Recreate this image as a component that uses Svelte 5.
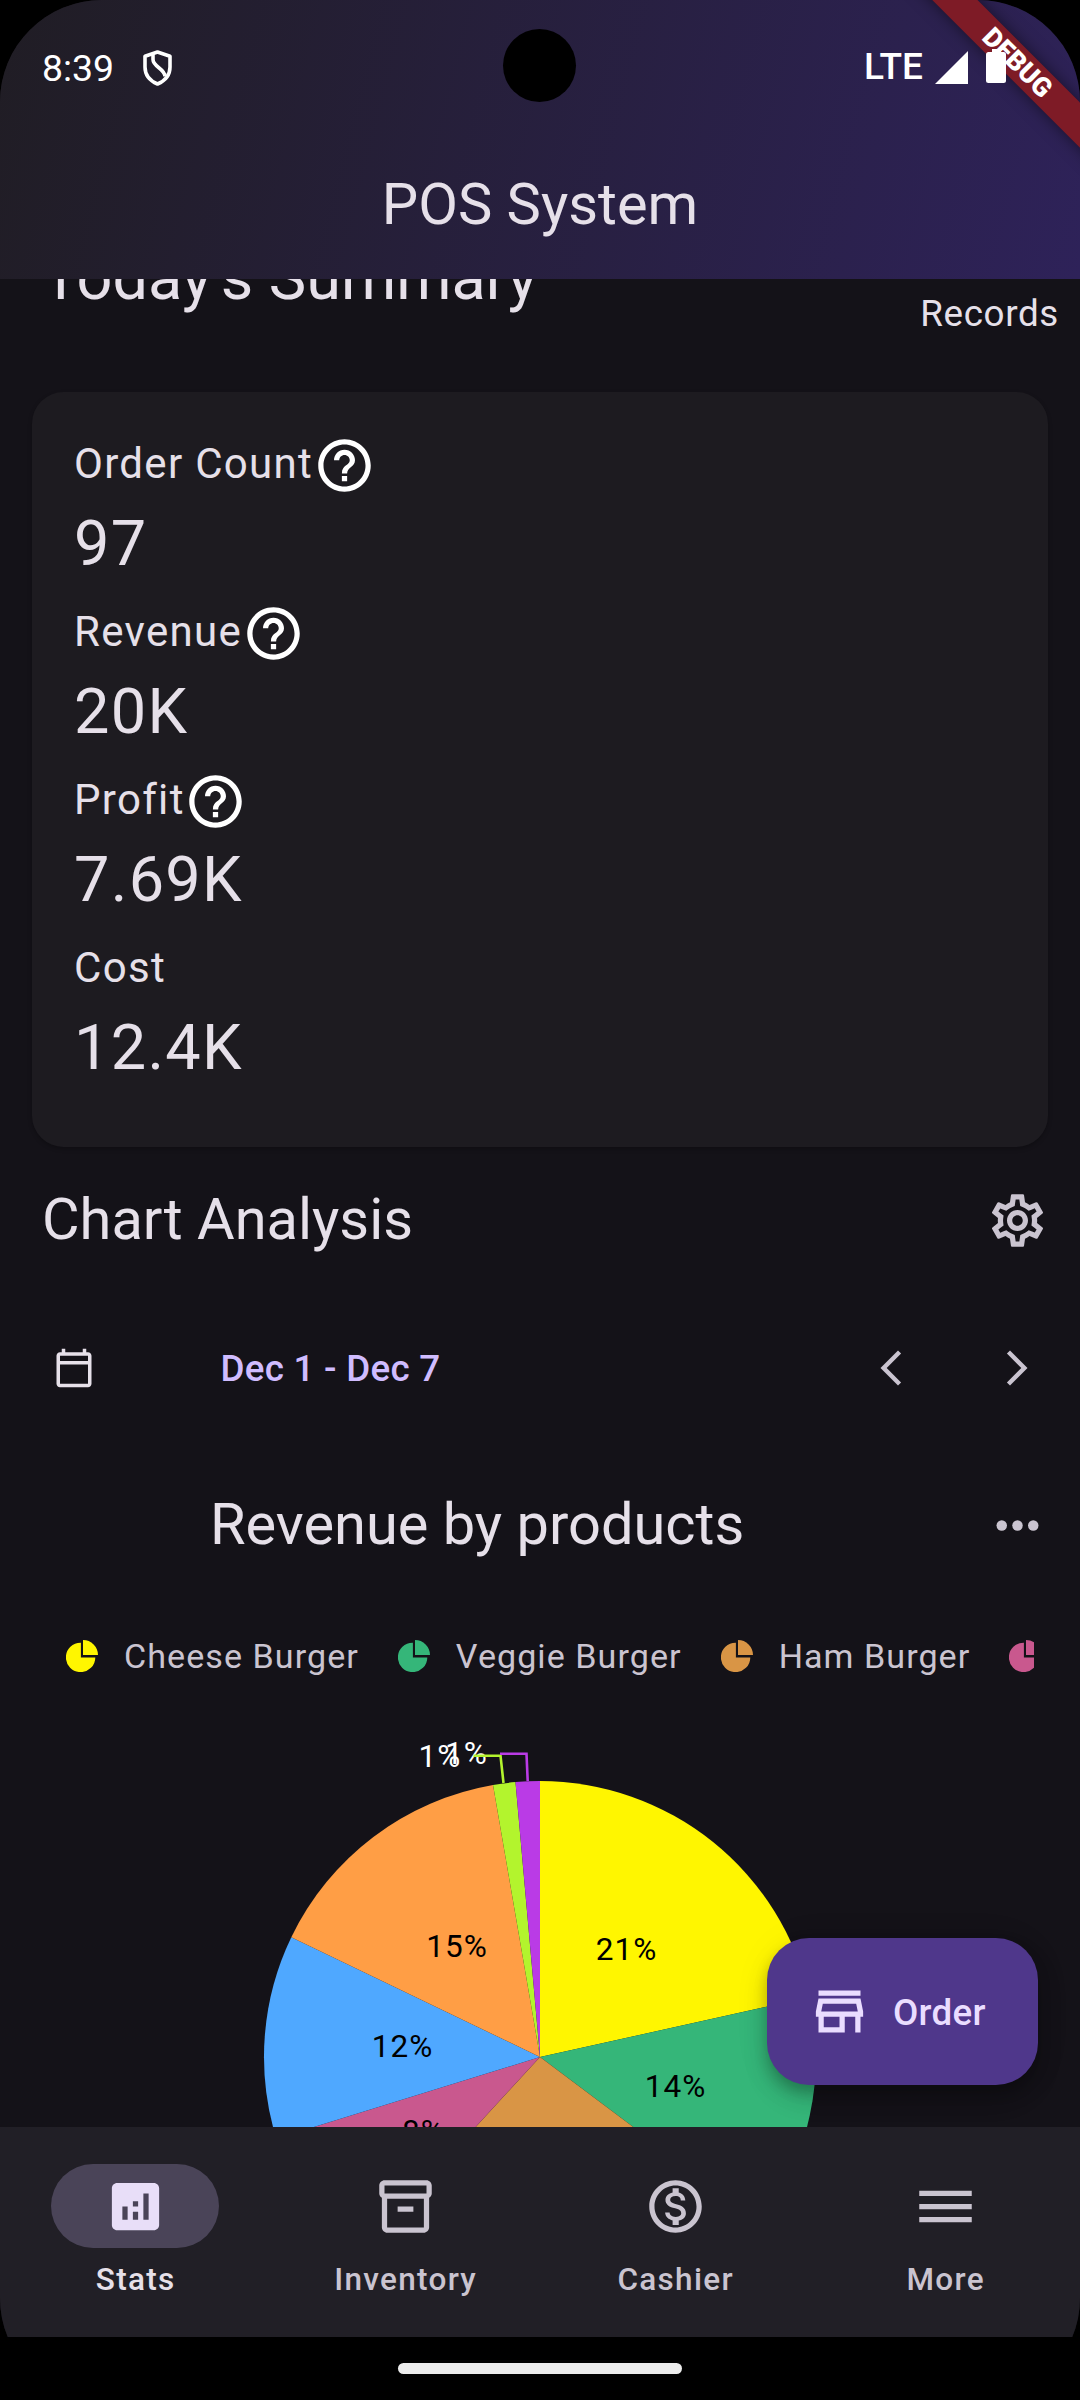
<script>
  const metrics = [
    { label: 'Order Count', value: '97', help: true },
    { label: 'Revenue', value: '20K', help: true },
    { label: 'Profit', value: '7.69K', help: true },
    { label: 'Cost', value: '12.4K', help: false },
  ];

  const legend = [
    { name: 'Cheese Burger', color: '#fff600' },
    { name: 'Veggie Burger', color: '#35b679' },
    { name: 'Ham Burger', color: '#d99545' },
    { name: '', color: '#c9588e' },
  ];

  // Slice boundaries in degrees, clockwise from twelve o'clock
  const slices = [
    { from: 0, to: 77.5, color: '#fff600' },
    { from: 77.5, to: 126.9, color: '#35b679' },
    { from: 126.9, to: 222.6, color: '#d99545' },
    { from: 222.6, to: 252.8, color: '#c9588e' },
    { from: 252.8, to: 295.7, color: '#4fa8ff' },
    { from: 295.7, to: 350.2, color: '#ff9e45' },
    { from: 350.2, to: 354.9, color: '#b3f42d' },
    { from: 354.9, to: 360, color: '#ba3be6' },
  ];

  const labels = [
    { text: '21%', x: 626.5, y: 247 },
    { text: '14%', x: 675.5, y: 384 },
    { text: '8%', x: 423.5, y: 429 },
    { text: '12%', x: 402.5, y: 344 },
    { text: '15%', x: 457, y: 244 },
  ];

  const cx = 540;
  const cy = 344;
  const r = 276;

  function point(deg) {
    const a = (deg * Math.PI) / 180;
    return `${(cx + r * Math.sin(a)).toFixed(2)} ${(cy - r * Math.cos(a)).toFixed(2)}`;
  }

  function wedge(s) {
    return `M${cx} ${cy}L${point(s.from)}A${r} ${r} 0 0 1 ${point(s.to)}Z`;
  }

  const tabs = [
    {
      name: 'Stats',
      active: true,
      icon: 'M19 3H5c-1.1 0-2 .9-2 2v14c0 1.1.9 2 2 2h14c1.1 0 2-.9 2-2V5c0-1.1-.9-2-2-2zM9 17H7v-5h2v5zm4 0h-2v-3h2v3zm0-5h-2v-2h2v2zm4 5h-2V7h2v10z',
    },
    {
      name: 'Inventory',
      active: false,
      icon: 'M20 2H4c-1 0-2 .9-2 2v3.01c0 .72.43 1.34 1 1.69V20c0 1.1 1.1 2 2 2h14c.9 0 2-.9 2-2V8.7c.57-.35 1-.97 1-1.69V4c0-1.1-1-2-2-2zm-1 18H5V9h14v11zm1-13H4V4h16v3zM9 12h6v2H9z',
    },
    {
      name: 'Cashier',
      active: false,
      icon: 'M12 2C6.48 2 2 6.48 2 12s4.48 10 10 10 10-4.48 10-10S17.52 2 12 2zm0 18c-4.41 0-8-3.59-8-8s3.59-8 8-8 8 3.59 8 8-3.59 8-8 8zm.31-8.86c-1.77-.45-2.34-.94-2.34-1.67 0-.84.79-1.43 2.1-1.43 1.38 0 1.9.66 1.94 1.64h1.71c-.05-1.34-.87-2.57-2.49-2.97V5H10.9v1.69c-1.51.32-2.72 1.3-2.72 2.81 0 1.79 1.49 2.69 3.66 3.21 1.95.46 2.34 1.15 2.34 1.87 0 .53-.39 1.39-2.1 1.39-1.6 0-2.23-.72-2.32-1.64H8.04c.1 1.7 1.36 2.66 2.86 2.97V19h2.34v-1.67c1.52-.29 2.72-1.16 2.73-2.77-.01-2.2-1.9-2.96-3.66-3.42z',
    },
    { name: 'More', active: false, icon: 'M2 6h20v2H2zm0 5h20v2H2zm0 5h20v2H2z' },
  ];
</script>

<div class="phone">
  <header>
    <div class="status">
      <span class="clock">8:39</span>
      <svg class="shield" viewBox="0 0 29 36" fill="none" stroke="#fff" stroke-width="3.6" stroke-linejoin="round">
        <path d="M14.500 2 27 6.300V17c0 7.600-4.800 13.800-12.500 17C6.800 30.800 2 24.600 2 17V6.300z" />
        <path d="M10 4.500v5c0 7.500 12 9 12 17" />
      </svg>
      <span class="lte">LTE</span>
      <svg class="signal" viewBox="0 0 33 33"><path d="M33 0v33H0z" fill="#fff" /></svg>
    </div>
    <h1>POS System</h1>
    <div class="camera"></div>
    <div class="banner"><span>DEBUG</span></div>
    <svg class="battery" viewBox="0 0 20 34" fill="#fff">
      <path d="M6 0h9v4H6z" />
      <rect y="3" width="20" height="31" rx="2.500" />
    </svg>
  </header>

  <main>
    <div class="summary-head">
      <h2 class="today">Today's Summary</h2>
      <span class="records">Records</span>
    </div>

    <section class="card">
      {#each metrics as m}
        <div class="metric">
          <div class="metric-label">
            <span>{m.label}</span>
            {#if m.help}
              <svg class="icon" viewBox="0 0 24 24" fill="#fff">
                <path d="M11 18h2v-2h-2v2zm1-16C6.480 2 2 6.480 2 12s4.480 10 10 10 10-4.480 10-10S17.520 2 12 2zm0 18c-4.410 0-8-3.590-8-8s3.590-8 8-8 8 3.590 8 8-3.590 8-8 8zm0-14c-2.210 0-4 1.790-4 4h2c0-1.100.9-2 2-2s2 .9 2 2c0 2-3 1.750-3 5h2c0-2.250 3-2.500 3-5 0-2.210-1.790-4-4-4z" />
              </svg>
            {/if}
          </div>
          <div class="metric-value">{m.value}</div>
        </div>
      {/each}
    </section>

    <div class="analysis-head">
      <h2>Chart Analysis</h2>
      <svg class="icon" viewBox="0 0 24 24" fill="#cac4d0">
        <path d="M19.430 12.980c.04-.32.070-.64.070-.98s-.03-.66-.07-.98l2.110-1.650c.19-.15.240-.42.120-.64l-2-3.460c-.09-.16-.26-.25-.44-.25-.06 0-.12.010-.17.030l-2.490 1c-.52-.4-1.080-.73-1.690-.98l-.38-2.650C14.460 2.180 14.250 2 14 2h-4c-.25 0-.46.180-.49.420l-.38 2.650c-.61.250-1.170.590-1.690.980l-2.490-1c-.06-.02-.12-.03-.18-.03-.17 0-.34.090-.43.250l-2 3.460c-.13.220-.07.490.120.640l2.110 1.650c-.04.320-.07.650-.07.980s.03.660.070.980l-2.110 1.650c-.19.150-.24.420-.12.640l2 3.460c.09.160.260.250.440.250.06 0 .12-.01.170-.03l2.490-1c.52.400 1.080.730 1.690.980l.38 2.650c.03.240.240.420.490.420h4c.25 0 .46-.18.490-.42l.38-2.650c.61-.25 1.170-.59 1.690-.98l2.490 1c.06.020.120.030.180.030.17 0 .34-.09.430-.25l2-3.460c.12-.22.070-.49-.12-.64l-2.110-1.650zm-1.980-1.710c.04.310.050.520.050.730s-.02.430-.05.730l-.14 1.130.890.700 1.080.840-.7 1.210-1.270-.51-1.040-.42-.9.680c-.43.320-.84.560-1.250.730l-1.060.430-.16 1.130-.2 1.350h-1.400l-.19-1.350-.16-1.130-1.060-.43c-.43-.18-.83-.41-1.230-.71l-.91-.7-1.060.430-1.270.510-.7-1.210 1.080-.84.890-.7-.14-1.130c-.03-.31-.05-.54-.05-.74s.02-.43.050-.73l.14-1.130-.89-.7-1.080-.84.700-1.210 1.270.510 1.040.420.900-.68c.43-.32.840-.56 1.250-.73l1.060-.43.160-1.130.2-1.350h1.390l.19 1.350.160 1.130 1.060.430c.43.180.830.410 1.230.710l.91.700 1.060-.43 1.270-.51.700 1.210-1.070.850-.89.700.140 1.130zM12 8c-2.210 0-4 1.790-4 4s1.790 4 4 4 4-1.790 4-4-1.790-4-4-4zm0 6c-1.100 0-2-.9-2-2s.9-2 2-2 2 .9 2 2-.9 2-2 2z" />
      </svg>
    </div>

    <div class="range">
      <svg class="small-icon" viewBox="0 0 24 24" fill="#e6e0e9">
        <path d="M20 3h-1V1h-2v2H7V1H5v2H4c-1.100 0-2 .9-2 2v16c0 1.100.9 2 2 2h16c1.100 0 2-.9 2-2V5c0-1.100-.9-2-2-2zm0 18H4V10h16v11zm0-13H4V5h16v3z" />
      </svg>
      <span class="dates">Dec 1 - Dec 7</span>
      <svg class="small-icon prev" viewBox="0 0 24 24" fill="#cac4d0">
        <path d="M17.770 3.770 16 2 6 12l10 10 1.770-1.770L9.540 12z" />
      </svg>
      <svg class="small-icon" viewBox="0 0 24 24" fill="#cac4d0">
        <path d="M6.230 20.230 8 22l10-10L8 2 6.230 3.770 14.460 12z" />
      </svg>
    </div>

    <div class="chart-head">
      <h2>Revenue by products</h2>
      <svg class="icon" viewBox="0 0 24 24" fill="#cac4d0">
        <circle cx="6" cy="12" r="2" /><circle cx="12" cy="12" r="2" /><circle cx="18" cy="12" r="2" />
      </svg>
    </div>

    <div class="legend">
      {#each legend as item}
        <div class="legend-item">
          <svg viewBox="0 0 32 32" fill={item.color}>
            <path d="M14.900 17.400V2.700A14.700 14.700 0 1 0 29.300 17.400z" />
            <path d="M17 0A15 15 0 0 1 32 15H17z" />
          </svg>
          <span>{item.name}</span>
        </div>
      {/each}
    </div>

    <svg class="pie" viewBox="0 0 1080 414" width="1080" height="414">
      {#each slices as s}
        <path d={wedge(s)} fill={s.color} />
      {/each}
      {#each labels as l}
        <text x={l.x} y={l.y} text-anchor="middle">{l.text}</text>
      {/each}
      <text class="outer" x="440" y="54" text-anchor="middle">1%</text>
      <text class="outer" x="466.500" y="51" text-anchor="middle">1%</text>
      <path d="M473.500 42.700H500.500L503.500 70" fill="none" stroke="#b3f42d" stroke-width="2.600" />
      <path d="M500 40.700H526.500L527.700 68" fill="none" stroke="#ba3be6" stroke-width="2.600" />
    </svg>

    <button class="fab">
      <svg class="icon" viewBox="0 0 24 24" fill="#eaddff">
        <path d="M18.360 9l.6 3H5.040l.6-3h12.720M20 4H4v2h16V4zm0 3H4l-1 5v2h1v6h10v-6h4v6h2v-6h1v-2l-1-5zM6 18v-4h6v4H6z" />
      </svg>
      <span>Order</span>
    </button>
  </main>

  <nav>
    {#each tabs as t}
      <div class="tab" class:active={t.active}>
        <div class="pill">
          <svg class="icon" viewBox="0 0 24 24" fill="currentColor"><path d={t.icon} /></svg>
        </div>
        <span>{t.name}</span>
      </div>
    {/each}
  </nav>
</div>
<div class="gesture"><div class="handle"></div></div>

<style>
  :global(body) {
    background: #000;
    font-family: Roboto, 'Liberation Sans', sans-serif;
  }

  .phone {
    width: 1080px;
    height: 2337px;
    display: flex;
    flex-direction: column;
    overflow: hidden;
    background: #141218;
    color: #e6e0e9;
    clip-path: inset(0 0 -63px 0 round 102px);
  }

  h1,
  h2 {
    margin: 0;
    font-size: 57.75px;
    line-height: 73.5px;
    font-weight: 400;
    white-space: nowrap;
  }

  .icon {
    display: block;
    width: 63px;
    height: 63px;
    flex: none;
  }

  header {
    position: relative;
    height: 279px;
    flex: none;
    overflow: hidden;
    background: linear-gradient(104.5deg, #201d24, #2e2259);
  }

  .status {
    height: 132px;
    box-sizing: border-box;
    padding: 3px 0 0 42px;
    display: flex;
    align-items: center;
    color: #fff;
    font-size: 37.4px;
  }

  .clock {
    width: 101px;
  }

  .shield {
    width: 29px;
    height: 36px;
  }

  .lte {
    margin-left: 692px;
    margin-top: -2px;
    width: 71px;
    font-weight: 500;
    font-size: 37px;
  }

  .signal {
    width: 33px;
    height: 33px;
  }

  header h1 {
    padding-top: 36px;
    text-align: center;
  }

  .camera {
    position: absolute;
    left: 503px;
    top: 29px;
    width: 73px;
    height: 73px;
    border-radius: 50%;
    background: #000;
  }

  .battery {
    position: absolute;
    left: 986px;
    top: 49px;
    width: 20px;
    height: 34px;
  }

  .banner {
    position: absolute;
    left: 867px;
    top: 46px;
    width: 300px;
    height: 31.5px;
    display: flex;
    align-items: center;
    justify-content: center;
    transform: rotate(45deg);
    background: #7e1b26;
    box-shadow: 0 0 16px rgba(0, 0, 0, 0.5);
    color: #fff;
    font-size: 26.8px;
    font-weight: 900;
  }

  .banner span {
    padding-left: 2px;
  }

  main {
    position: relative;
    height: 1848px;
    overflow: hidden;
  }

  .summary-head {
    height: 113px;
    display: flex;
    align-items: flex-start;
    justify-content: space-between;
    padding: 0 21px 0 42px;
  }

  .today {
    margin-top: -43px;
    font-size: 63px;
    line-height: 84px;
  }

  .records {
    margin-top: 9px;
    font-size: 36.75px;
    line-height: 52.5px;
    letter-spacing: 0.66px;
  }

  .card {
    margin: 0 32px;
    height: 755px;
    box-sizing: border-box;
    padding: 40px 42px 0;
    border-radius: 31.5px;
    background: #1d1b20;
    box-shadow: 0 2px 4px rgba(0, 0, 0, 0.25);
  }

  .metric {
    height: 168px;
  }

  .metric-label {
    display: flex;
    height: 70px;
    font-size: 42px;
    line-height: 63px;
    letter-spacing: 1.31px;
  }

  .metric-label .icon {
    margin-top: 2px;
    margin-left: -0.5px;
  }

  .metric-value {
    font-size: 63px;
    line-height: 84px;
    letter-spacing: 1.31px;
  }

  .analysis-head {
    height: 146px;
    padding: 0 31.5px 0 42px;
    display: flex;
    align-items: center;
    justify-content: space-between;
  }

  .range {
    height: 126px;
    margin-top: 12px;
    padding: 0 42px 0 52.5px;
    display: flex;
    align-items: center;
  }

  .small-icon {
    width: 42px;
    height: 42px;
    flex: none;
  }

  .dates {
    margin-left: 126px;
    color: #d0bcff;
    font-size: 36.75px;
    font-weight: 500;
    letter-spacing: 0.26px;
  }

  .prev {
    margin-left: auto;
    margin-right: 84px;
  }

  .chart-head {
    height: 126px;
    margin-top: 31px;
    padding: 0 31.5px 0 210px;
    display: flex;
    align-items: center;
    justify-content: space-between;
  }

  .chart-head h2 {
    margin-top: -1px;
  }

  .legend {
    margin: 0 46px 0 66px;
    padding-top: 36px;
    height: 89px;
    box-sizing: content-box;
    display: flex;
    gap: 39px;
    overflow: hidden;
  }

  .legend-item {
    flex: none;
    display: flex;
    align-items: center;
    gap: 26px;
    height: 63px;
    color: #cac4d0;
    font-size: 34.1px;
    letter-spacing: 1.05px;
    white-space: nowrap;
  }

  .legend-item svg {
    width: 32px;
    height: 32px;
  }

  .pie {
    display: block;
  }

  .pie text {
    font-size: 31.5px;
    letter-spacing: 1.05px;
    fill: #000;
  }

  .pie .outer {
    fill: #fff;
  }

  .fab {
    position: absolute;
    right: 42px;
    bottom: 42px;
    width: 271px;
    height: 147px;
    padding: 0 0 0 41px;
    border: 0;
    border-radius: 42px;
    display: flex;
    align-items: center;
    gap: 22px;
    background: #4f378b;
    color: #eaddff;
    font: 500 36.75px Roboto, 'Liberation Sans', sans-serif;
    letter-spacing: 0.26px;
    box-shadow:
      0 8px 13px rgba(0, 0, 0, 0.2),
      0 14px 26px rgba(0, 0, 0, 0.14),
      0 3px 40px rgba(0, 0, 0, 0.05);
  }

  .fab span {
    padding-top: 2px;
  }

  nav {
    height: 210px;
    display: grid;
    grid-template-columns: repeat(4, 1fr);
    background: #211f26;
  }

  .tab {
    display: flex;
    flex-direction: column;
    align-items: center;
    padding-top: 37px;
    color: #cac4d0;
    font-size: 31.5px;
    font-weight: 500;
    line-height: 42px;
    letter-spacing: 1.31px;
  }

  .tab span {
    padding-left: 1.3px;
  }

  .pill {
    width: 168px;
    height: 84px;
    margin-bottom: 11px;
    border-radius: 42px;
    display: flex;
    align-items: center;
    justify-content: center;
  }

  .active {
    color: #e6e0e9;
  }

  .active .pill {
    background: #4a4458;
    color: #e8def8;
  }

  .gesture {
    height: 63px;
    display: flex;
    justify-content: center;
    align-items: center;
    background: #000;
  }

  .handle {
    width: 284px;
    height: 11px;
    border-radius: 5.5px;
    background: #ececec;
  }
</style>
